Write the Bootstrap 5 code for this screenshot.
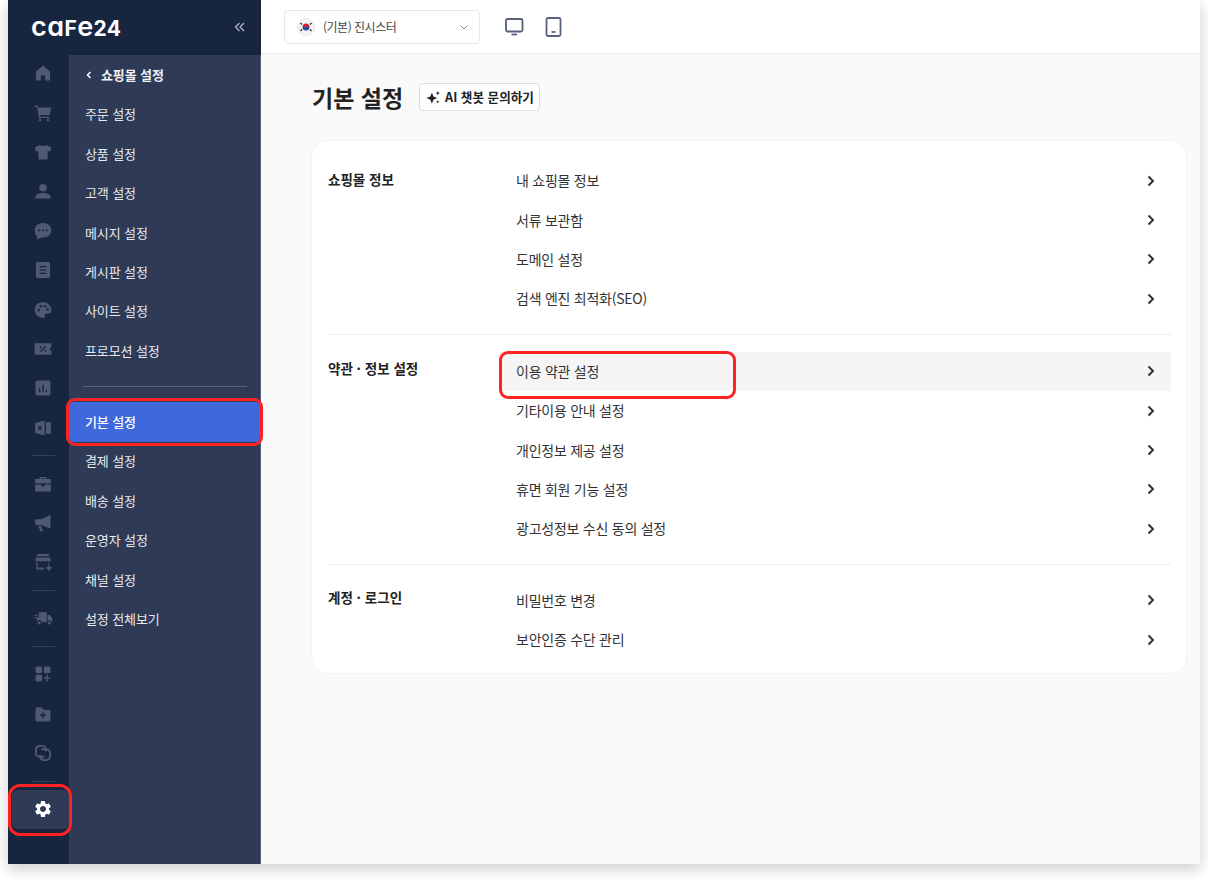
<!DOCTYPE html>
<html lang="ko">
<head>
    <meta charset="UTF-8">
    <meta name="viewport" content="width=device-width, initial-scale=1.0">
    <title>기본 설정</title>
    <link rel="stylesheet" href="https://cdn.jsdelivr.net/npm/bootstrap@5.3.0/dist/css/bootstrap.min.css">
    <style>
        html, body { height: 100%; }
        body {
            background: #fff;
            font-family: "Noto Sans CJK KR", "Noto Sans", sans-serif;
            color: #222;
            overflow: hidden;
        }
        .app-frame {
            width: 1192px;
            height: 864px;
            margin-left: 8px;
            box-shadow: 0 5px 14px rgba(0, 0, 0, .2);
        }
        .side-wrap { width: 253px; background: #18253f; flex-shrink: 0; }
        .brand-bar { height: 55px; padding: 0 15px 2px 23px; }
        .brand-logo { font-family: Inter, sans-serif; color: #fff; font-weight: 600; font-size: 27px; line-height: 1; letter-spacing: .4px; font-feature-settings: "cv11"; }
        .brand-logo span { font-size: 21px; font-weight: 700; }
        .rail { width: 61px; margin-top: -1.5px; flex-shrink: 0; }
        .rail-btn { height: 39.4px; padding-left: 9px; }
        .rail-btn svg { width: 20px; height: 20px; fill: #4e5975; }
        .rail-line { height: 16.6px; }
        .rail-line hr { width: 24px; margin: 0 0 0 23px; border-color: #33405c; opacity: 1; }
        .rail-active { position: relative; background: #2e3a56; border-radius: 5px; margin-left: 4px; padding-left: 5px; }
        .rail-active svg { fill: #fff; }
        .mark-box { position: absolute; border: 3.5px solid #ff2222; border-radius: 9px; pointer-events: none; }
        .mark-gear { left: -4px; right: -3px; top: -5.5px; bottom: -7px; border-radius: 12px; }
        .submenu { width: 192px; background: #2e3a56; border-right: 1px solid #56617c; }
        .submenu a { display: flex; align-items: center; height: 39.4px; padding-left: 16px; font-size: 13px; color: #e8eaef; text-decoration: none; letter-spacing: -.1px; }
        .submenu a.sub-head { font-weight: 600; color: #f2f3f6; }
        .submenu a.sub-on { position: relative; background: #3f68dd; color: #fff; font-weight: 500; border-radius: 4px; }
        .mark-menu { left: -3px; right: -3px; top: -4px; bottom: -4px; }
        .sub-line { height: 32px; padding: 0 13px 0 14px; }
        .sub-line hr { width: 100%; margin: 0; border-color: #56617c; opacity: 1; }
        .main-area { background: #fafafa; min-width: 0; }
        .top-bar { height: 54px; background: #fff; border-bottom: 1px solid #f0f0f0; padding-left: 23px; gap: 18.5px; }
        .shop-pick { width: 196px; height: 34px; background: #fff; border: 1px solid #e8e8e8; border-radius: 4px; padding: 0 10px 0 12px; font-size: 12px; letter-spacing: -.5px; color: #444; margin-right: 6px; }
        .main-body { padding: 28px 13px 0 51px; }
        .page-title { font-size: 23px; font-weight: 700; margin: 0; line-height: 30px; color: #222; }
        .ai-btn { height: 28px; padding: 0 5px 0 6px; font-size: 12.6px; font-weight: 700; color: #222; background: #fff; border: 1px solid #ddd; border-radius: 4px; --bs-btn-hover-bg: #fff; }
        .set-card { margin: 28px 0 0 -1px; height: 534px; background: #fff; border: 1px solid #f3f3f3; border-radius: 16px; padding: 0 15px 0 16px; }
        .set-sec { padding: 17px 0 15px; border-bottom: 1px solid #eee; }
        .set-sec:first-child { padding-top: 20px; }
        .set-sec:last-child { border-bottom: 0; padding: 16px 0 0; }
        .sec-name { width: 172px; flex-shrink: 0; font-size: 13.5px; font-weight: 700; line-height: 20px; padding-top: 6.5px; color: #222; }
        .set-sec:first-child .sec-name { padding-top: 8px; }
        .set-row { height: 39.4px; padding: 0 14px 0 16px; font-size: 14px; letter-spacing: -.25px; color: #333; text-decoration: none; position: relative; }
        .set-row svg { width: 12px; height: 12px; }
        .row-hover { background: #f5f5f5; }
        .mark-row { left: -1px; top: -1px; width: 237px; height: 48px; }
    </style>
</head>
<body>
<div class="app-frame d-flex">
    <div class="side-wrap d-flex flex-column">
        <div class="brand-bar d-flex align-items-center justify-content-between">
            <div class="brand-logo">ca<span>F</span>e<span>24</span></div>
            <svg width="12" height="12" viewBox="0 0 12 12" fill="none" stroke="#aeb4c2" stroke-width="1.3"><path d="M5.500 2 1.500 6l4 4M10 2 6 6l4 4"/></svg>
        </div>
        <div class="d-flex flex-grow-1">
            <div class="rail d-flex flex-column">
                <div class="rail-btn d-flex align-items-center justify-content-center"><svg viewBox="0 0 24 24"><path d="M12 3 3.500 10.500V21H9.500v-6h5v6H20.500V10.500z"/></svg></div>
                <div class="rail-btn d-flex align-items-center justify-content-center"><svg viewBox="0 0 24 24"><path d="M2 3h3.500l.7 2.500H22l-2 9H8.500L9 16.500h11V18H7L5 5 2 4.500z"/><circle cx="8.500" cy="20.500" r="1.500"/><circle cx="18" cy="20.500" r="1.500"/></svg></div>
                <div class="rail-btn d-flex align-items-center justify-content-center"><svg viewBox="0 0 24 24"><path d="M8 3.500c1 1.800 7 1.800 8 0l6 3-1.500 5-3-.8V21h-11V10.700l-3 .8L2 6.500z"/></svg></div>
                <div class="rail-btn d-flex align-items-center justify-content-center"><svg viewBox="0 0 24 24"><circle cx="12" cy="8" r="4.500"/><path d="M2.500 21c0-4.500 4.300-6.500 9.500-6.500s9.500 2 9.500 6.500z"/></svg></div>
                <div class="rail-btn d-flex align-items-center justify-content-center"><svg viewBox="0 0 24 24"><path d="M12 2.500c5.600 0 10 3.700 10 8.700s-4.400 8.700-10 8.700c-.8 0-1.500-.1-2.200-.2L5 22.500v-4C3 16.800 2 14.200 2 11.200 2 6.200 6.400 2.500 12 2.500z"/><circle cx="7.500" cy="11" r="1.200" fill="#18253f"/><circle cx="12" cy="11" r="1.200" fill="#18253f"/><circle cx="16.500" cy="11" r="1.200" fill="#18253f"/></svg></div>
                <div class="rail-btn d-flex align-items-center justify-content-center"><svg viewBox="0 0 24 24"><rect x="3.500" y="2.500" width="17" height="19" rx="2"/><path d="M8 8h8M8 12h8M8 16h8" stroke="#18253f" stroke-width="1.500"/></svg></div>
                <div class="rail-btn d-flex align-items-center justify-content-center"><svg viewBox="0 0 24 24"><path d="M12 2.500C6.500 2.500 2 6.800 2 12s4.500 9.500 10 9.500c1.800 0 2.500-1.100 2.200-2.400-.4-1.600.6-2.900 2.300-2.900h2.300c1.900 0 3.200-1.500 3.200-3.700 0-5.600-4.500-10-10-10z"/><circle cx="7" cy="12" r="1.500" fill="#18253f"/><circle cx="9.500" cy="7.500" r="1.500" fill="#18253f"/><circle cx="14.500" cy="7.500" r="1.500" fill="#18253f"/><circle cx="17.500" cy="11.500" r="1.500" fill="#18253f"/></svg></div>
                <div class="rail-btn d-flex align-items-center justify-content-center"><svg viewBox="0 0 24 24"><path d="M2 5h20v5c-1.300.4-2 1.100-2 2s.7 1.600 2 2v5H2z"/><path d="M9 15l6-6" stroke="#18253f" stroke-width="1.400"/><circle cx="9" cy="10" r="1.200" fill="#18253f"/><circle cx="15" cy="14" r="1.200" fill="#18253f"/></svg></div>
                <div class="rail-btn d-flex align-items-center justify-content-center"><svg viewBox="0 0 24 24"><rect x="3" y="3" width="18" height="18" rx="2.500"/><path d="M8 17v-5M12 17V8M16 17v-3" stroke="#18253f" stroke-width="1.600"/></svg></div>
                <div class="rail-btn d-flex align-items-center justify-content-center"><svg viewBox="0 0 24 24"><path d="M2.500 6 14 3v18L2.500 18z"/><path d="M15.500 5H21.500v14h-6z"/><path d="m6.500 10 3.500 4.500M10 10l-3.500 4.500" stroke="#18253f" stroke-width="1.400"/></svg></div>
                <div class="rail-line d-flex align-items-center"><hr></div>
                <div class="rail-btn d-flex align-items-center justify-content-center"><svg viewBox="0 0 24 24"><path d="M8 6V3.500h8V6h5.500v5h-19V6zM10 6h4V5h-4z" fill-rule="evenodd"/><path d="M2.500 12.500H10V15h4v-2.500h7.500V21h-19z"/></svg></div>
                <div class="rail-btn d-flex align-items-center justify-content-center"><svg viewBox="0 0 24 24"><path d="M21 2.500v16L9.500 14.500H4A1.500 1.500 0 0 1 2.500 13V9A1.500 1.500 0 0 1 4 7.500h5.500z"/><path d="m6 15.500h3.500l2.500 6-2.500 1z"/></svg></div>
                <div class="rail-btn d-flex align-items-center justify-content-center"><svg viewBox="0 0 24 24"><path d="M5 2.500h14V5H5zM3.500 6.500h17l1 4.500h-19z"/><path d="M4 12.500h1.800v6H13V21H4zM18.200 12.500H20V14h-1.800zM18 15.500h2v2.500h2.500v2H20v2.500h-2V20h-2.500v-2H18z"/></svg></div>
                <div class="rail-line d-flex align-items-center"><hr></div>
                <div class="rail-btn d-flex align-items-center justify-content-center"><svg viewBox="0 0 24 24"><path d="M7 5h9.500v12H10a2.500 2.500 0 0 0-5 0H4.500V12H7zM17.500 8.500h2.800l2.700 4V17h-1a2.500 2.500 0 0 0-4.500-1z"/><circle cx="7.500" cy="18" r="1.800"/><circle cx="19.500" cy="18" r="1.800"/><path d="M1 8h5v1.300H1zM1.500 11h4.500v1.300H1.500z"/></svg></div>
                <div class="rail-line d-flex align-items-center"><hr></div>
                <div class="rail-btn d-flex align-items-center justify-content-center"><svg viewBox="0 0 24 24"><rect x="3" y="3" width="8" height="8" rx="2"/><rect x="13" y="3" width="8" height="8" rx="2"/><rect x="3" y="13" width="8" height="8" rx="2"/><path d="M16.200 13h1.600v3.200H21v1.600h-3.200V21h-1.600v-3.200H13v-1.600h3.200z"/></svg></div>
                <div class="rail-btn d-flex align-items-center justify-content-center"><svg viewBox="0 0 24 24"><path d="M3 6a2 2 0 0 1 2-2h5l2.500 3H19a2 2 0 0 1 2 2v10a2 2 0 0 1-2 2H5a2 2 0 0 1-2-2z"/><path d="M12 10v7M8.500 13.500h7" stroke="#18253f" stroke-width="1.600"/></svg></div>
                <div class="rail-btn d-flex align-items-center justify-content-center"><svg viewBox="0 0 24 24"><path fill="none" stroke="#4e5975" stroke-width="2.200" d="M14 16.500H8a4.500 4.500 0 0 1-4.500-4.500V8A4.500 4.500 0 0 1 8 3.500h3A4.500 4.500 0 0 1 15.500 8v2M10 7.500h6a4.500 4.500 0 0 1 4.500 4.500v4a4.500 4.500 0 0 1-4.500 4.500h-3A4.500 4.500 0 0 1 8.500 16v-2"/></svg></div>
                <div class="rail-line d-flex align-items-center"><hr></div>
                <div class="rail-active rail-btn d-flex align-items-center justify-content-center">
                    <svg viewBox="0 0 24 24"><path d="M19.140 12.940c.04-.3.06-.61.06-.94 0-.32-.02-.64-.07-.94l2.030-1.580c.18-.14.23-.41.12-.61l-1.920-3.320c-.12-.22-.37-.29-.59-.22l-2.390.96c-.5-.38-1.030-.7-1.620-.94l-.36-2.540c-.04-.24-.24-.41-.48-.41h-3.840c-.24 0-.43.17-.47.41l-.36 2.540c-.59.24-1.130.57-1.620.94l-2.390-.96c-.22-.08-.47 0-.59.22L2.740 8.870c-.12.21-.08.47.12.61l2.030 1.580c-.05.3-.09.63-.09.94s.02.64.07.94l-2.030 1.580c-.18.14-.23.41-.12.61l1.920 3.320c.12.22.37.29.59.22l2.390-.96c.5.38 1.030.7 1.620.94l.36 2.540c.05.24.24.41.48.41h3.840c.24 0 .44-.17.47-.41l.36-2.540c.59-.24 1.130-.56 1.620-.94l2.390.96c.22.08.47 0 .59-.22l1.920-3.320c.12-.22.07-.47-.12-.61l-2.010-1.580zM12 15.600c-1.980 0-3.600-1.620-3.600-3.600s1.620-3.600 3.600-3.600 3.600 1.620 3.600 3.600-1.620 3.600-3.600 3.600z"/></svg>
                    <div class="mark-box mark-gear"></div>
                </div>
            </div>
            <div class="submenu flex-grow-1 d-flex flex-column">
                <a href="#" class="sub-head"><svg class="me-2" width="8" height="8" viewBox="0 0 8 8" fill="none" stroke="#fff" stroke-width="1.500"><path d="M5.500 1 2.500 4l3 3"/></svg>쇼핑몰 설정</a>
                <a href="#">주문 설정</a>
                <a href="#">상품 설정</a>
                <a href="#">고객 설정</a>
                <a href="#">메시지 설정</a>
                <a href="#">게시판 설정</a>
                <a href="#">사이트 설정</a>
                <a href="#">프로모션 설정</a>
                <div class="sub-line d-flex align-items-center"><hr></div>
                <a href="#" class="sub-on">기본 설정<div class="mark-box mark-menu"></div></a>
                <a href="#">결제 설정</a>
                <a href="#">배송 설정</a>
                <a href="#">운영자 설정</a>
                <a href="#">채널 설정</a>
                <a href="#">설정 전체보기</a>
            </div>
        </div>
    </div>
    <div class="main-area flex-grow-1 d-flex flex-column">
        <div class="top-bar d-flex align-items-center">
            <div class="shop-pick d-flex align-items-center">
                <svg class="me-2" width="18" height="18" viewBox="0 0 18 18"><circle cx="9" cy="9" r="8.500" fill="#f4f4f4" stroke="#e4e4e4"/><path d="M5.500 9a3.500 3.500 0 0 1 7 0z" fill="#d0243c"/><path d="M5.500 9a3.500 3.500 0 0 0 7 0z" fill="#1d4f9c"/><path d="M3.500 5 5 6.500M13 6.500l1.500-1.500M3.500 13 5 11.500M14.500 13 13 11.500" stroke="#333" stroke-width="1.400"/></svg>
                <span class="flex-grow-1">(기본) 진시스터</span>
                <svg width="10" height="10" viewBox="0 0 10 10" fill="none" stroke="#888"><path d="m1.500 3.500 3.500 3.500 3.500-3.500"/></svg>
            </div>
            <svg width="20" height="20" viewBox="0 0 20 20" fill="none" stroke="#56617c" stroke-width="1.800"><rect x="1" y="2" width="16.500" height="12.500" rx="1.500"/><path d="M6.500 17.500h5.500"/></svg>
            <svg width="20" height="20" viewBox="0 0 20 20" fill="none" stroke="#56617c" stroke-width="1.800"><rect x="3.500" y="1" width="14" height="18" rx="1.500"/><path d="M8.500 15h4"/></svg>
        </div>
        <div class="main-body">
            <div class="d-flex align-items-center gap-3">
                <h1 class="page-title">기본 설정</h1>
                <button type="button" class="btn ai-btn d-flex align-items-center gap-1">
                    <svg width="15" height="15" viewBox="0 0 14 14" fill="#222"><path d="M5.500 2.500 7 6l3.500 1.500L7 9l-1.500 3.500L4 9 .5 7.500 4 6zM11 1l.6 1.400L13 3l-1.400.6L11 5l-.6-1.400L9 3l1.400-.6zM11 9.500l.5 1.100 1 .4-1 .4-.5 1.100-.5-1.100-1-.4 1-.4z"/></svg>
                    AI 챗봇 문의하기
                </button>
            </div>
            <div class="set-card">
                <div class="set-sec d-flex">
                    <div class="sec-name">쇼핑몰 정보</div>
                    <div class="flex-grow-1">
                        <a href="#" class="set-row d-flex align-items-center justify-content-between">내 쇼핑몰 정보<svg viewBox="0 0 12 12" fill="none" stroke="#333" stroke-width="2"><path d="m3.500 1.500 4.500 4.500-4.500 4.500"/></svg></a>
                        <a href="#" class="set-row d-flex align-items-center justify-content-between">서류 보관함<svg viewBox="0 0 12 12" fill="none" stroke="#333" stroke-width="2"><path d="m3.500 1.500 4.500 4.500-4.500 4.500"/></svg></a>
                        <a href="#" class="set-row d-flex align-items-center justify-content-between">도메인 설정<svg viewBox="0 0 12 12" fill="none" stroke="#333" stroke-width="2"><path d="m3.500 1.500 4.500 4.500-4.500 4.500"/></svg></a>
                        <a href="#" class="set-row d-flex align-items-center justify-content-between">검색 엔진 최적화(SEO)<svg viewBox="0 0 12 12" fill="none" stroke="#333" stroke-width="2"><path d="m3.500 1.500 4.500 4.500-4.500 4.500"/></svg></a>
                    </div>
                </div>
                <div class="set-sec d-flex">
                    <div class="sec-name">약관 · 정보 설정</div>
                    <div class="flex-grow-1">
                        <a href="#" class="set-row row-hover d-flex align-items-center justify-content-between">이용 약관 설정<svg viewBox="0 0 12 12" fill="none" stroke="#333" stroke-width="2"><path d="m3.500 1.500 4.500 4.500-4.500 4.500"/></svg><div class="mark-box mark-row"></div></a>
                        <a href="#" class="set-row d-flex align-items-center justify-content-between">기타이용 안내 설정<svg viewBox="0 0 12 12" fill="none" stroke="#333" stroke-width="2"><path d="m3.500 1.500 4.500 4.500-4.500 4.500"/></svg></a>
                        <a href="#" class="set-row d-flex align-items-center justify-content-between">개인정보 제공 설정<svg viewBox="0 0 12 12" fill="none" stroke="#333" stroke-width="2"><path d="m3.500 1.500 4.500 4.500-4.500 4.500"/></svg></a>
                        <a href="#" class="set-row d-flex align-items-center justify-content-between">휴면 회원 기능 설정<svg viewBox="0 0 12 12" fill="none" stroke="#333" stroke-width="2"><path d="m3.500 1.500 4.500 4.500-4.500 4.500"/></svg></a>
                        <a href="#" class="set-row d-flex align-items-center justify-content-between">광고성정보 수신 동의 설정<svg viewBox="0 0 12 12" fill="none" stroke="#333" stroke-width="2"><path d="m3.500 1.500 4.500 4.500-4.500 4.500"/></svg></a>
                    </div>
                </div>
                <div class="set-sec d-flex">
                    <div class="sec-name">계정 · 로그인</div>
                    <div class="flex-grow-1">
                        <a href="#" class="set-row d-flex align-items-center justify-content-between">비밀번호 변경<svg viewBox="0 0 12 12" fill="none" stroke="#333" stroke-width="2"><path d="m3.500 1.500 4.500 4.500-4.500 4.500"/></svg></a>
                        <a href="#" class="set-row d-flex align-items-center justify-content-between">보안인증 수단 관리<svg viewBox="0 0 12 12" fill="none" stroke="#333" stroke-width="2"><path d="m3.500 1.500 4.500 4.500-4.500 4.500"/></svg></a>
                    </div>
                </div>
            </div>
        </div>
    </div>
</div>
<script src="https://cdn.jsdelivr.net/npm/bootstrap@5.3.0/dist/js/bootstrap.bundle.min.js"></script>
</body>
</html>
